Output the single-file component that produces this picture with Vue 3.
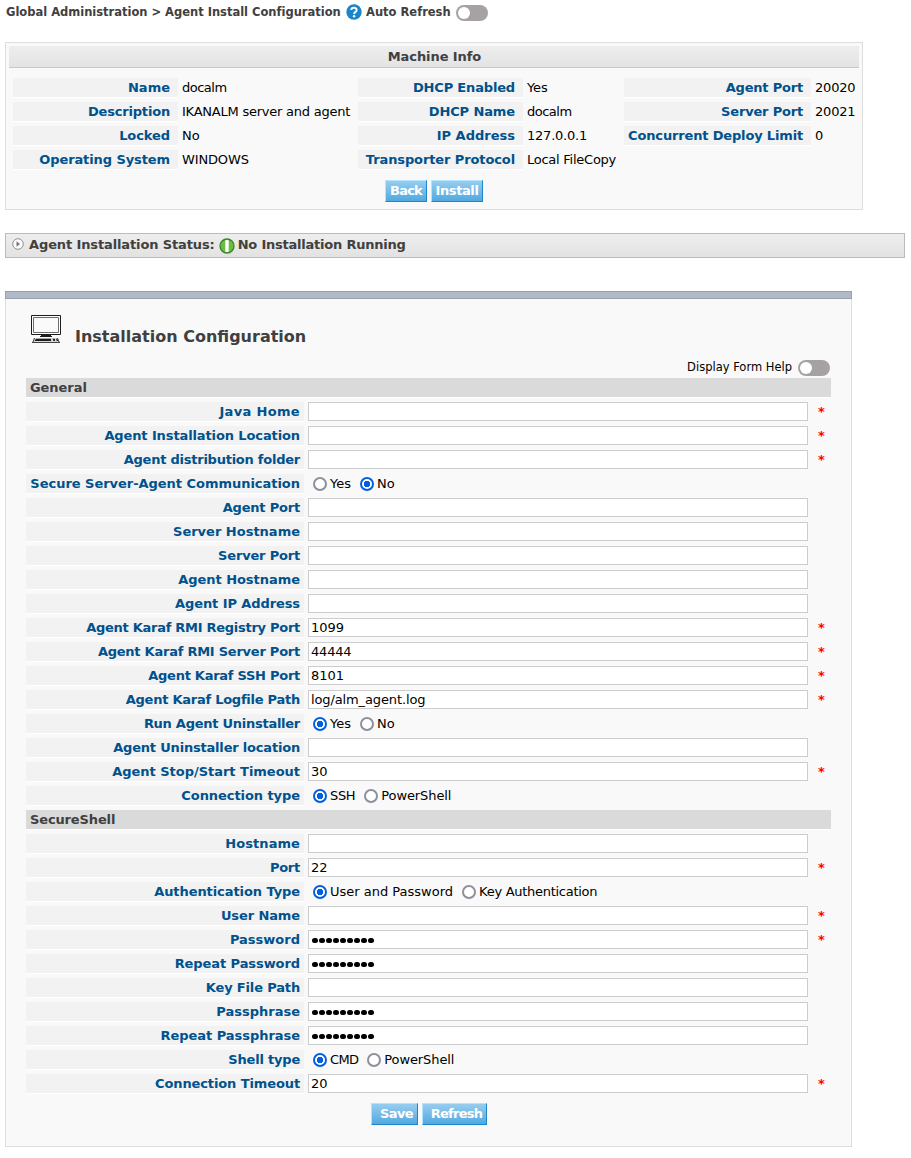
<script setup>
// Each text may carry a tracking amount: the total px to spread over its letters.
const columns = [
  { k: 'c1', rows: [['Name', 'docalm', 0, -3], ['Description', 'IKANALM server and agent', -2, -5.5], ['Locked', 'No', -0.5, 0], ['Operating System', 'WINDOWS', -1.5, -1]] },
  { k: 'c2', rows: [['DHCP Enabled', 'Yes', -2, -0.5], ['DHCP Name', 'docalm', -1, -3], ['IP Address', '127.0.0.1', 0, -2], ['Transporter Protocol', 'Local FileCopy', -2.2, -3.5]] },
  { k: 'c3', rows: [['Agent Port', '20020', -2, -1], ['Server Port', '20021', -2, -1], ['Concurrent Deploy Limit', '0', -3.7, 0]] }
]
const sections = [
  {
    title: 'General',
    t: -0.4,
    rows: [
      { l: 'Java Home', t: 3, req: true },
      { l: 'Agent Installation Location', t: -3, req: true },
      { l: 'Agent distribution folder', t: -6, req: true },
      { l: 'Secure Server-Agent Communication', t: -1, opts: [['Yes', 0], ['No', 0]], sel: 1 },
      { l: 'Agent Port', t: -2 },
      { l: 'Server Hostname', t: 0 },
      { l: 'Server Port', t: -2 },
      { l: 'Agent Hostname', t: -0.5 },
      { l: 'Agent IP Address', t: -1.5 },
      { l: 'Agent Karaf RMI Registry Port', t: -8, v: '1099', req: true },
      { l: 'Agent Karaf RMI Server Port', t: -6.5, v: '44444', vt: -1, req: true },
      { l: 'Agent Karaf SSH Port', t: -5.3, v: '8101', req: true },
      { l: 'Agent Karaf Logfile Path', t: -6, v: 'log/alm_agent.log', vt: -2, req: true },
      { l: 'Run Agent Uninstaller', t: -5.5, opts: [['Yes', 0], ['No', 0]], sel: 0 },
      { l: 'Agent Uninstaller location', t: -5 },
      { l: 'Agent Stop/Start Timeout', t: -0.5, v: '30', req: true },
      { l: 'Connection type', t: -1, opts: [['SSH', -1], ['PowerShell', -1]], sel: 0 }
    ]
  },
  {
    title: 'SecureShell',
    t: -1.5,
    rows: [
      { l: 'Hostname', t: 0.5 },
      { l: 'Port', t: -1, v: '22', req: true },
      { l: 'Authentication Type', t: -1.5, opts: [['User and Password', 0], ['Key Authentication', -5]], sel: 0 },
      { l: 'User Name', t: -1, req: true },
      { l: 'Password', t: 0, dots: 9, req: true },
      { l: 'Repeat Password', t: -1.2, dots: 9 },
      { l: 'Key File Path', t: -2 },
      { l: 'Passphrase', t: 0, dots: 9 },
      { l: 'Repeat Passphrase', t: -0.7, dots: 9 },
      { l: 'Shell type', t: -2, opts: [['CMD', -2], ['PowerShell', -1]], sel: 0 },
      { l: 'Connection Timeout', t: -2, v: '20', req: true }
    ]
  }
]
const track = (text, total) => ({ letterSpacing: `${((total || 0) / text.length).toFixed(3)}px` })
</script>

<template>
  <div class="page">
    <header class="crumbs">
      <span class="path">Global Administration &gt; Agent Install Configuration</span>
      <svg class="help" width="16" height="16" viewBox="0 0 16 16">
        <circle cx="8" cy="8" r="7.7" fill="#1c84c9" />
        <path d="M5.3 6.1C5.3 2.9 10.7 2.9 10.7 6C10.7 8 8.1 8 8.1 10" fill="none" stroke="#fff" stroke-width="1.9" />
        <circle cx="8.1" cy="12.3" r="1.2" fill="#fff" />
      </svg>
      <span class="auto">Auto Refresh</span>
      <span class="toggle"></span>
    </header>

    <section class="machine">
      <h2>Machine Info</h2>
      <div class="cols">
        <div v-for="c in columns" :key="c.k" class="col" :class="c.k">
          <div v-for="r in c.rows" :key="r[0]" class="pair">
            <span class="lbl" :style="track(r[0], r[2])">{{ r[0] }}</span>
            <span class="val" :style="track(r[1], r[3])">{{ r[1] }}</span>
          </div>
        </div>
      </div>
      <div class="buttons">
        <button class="btn back">Back</button>
        <button class="btn install">Install</button>
      </div>
    </section>

    <section class="status">
      <svg width="12" height="12" viewBox="0 0 12 12">
        <circle cx="6" cy="6" r="5.3" fill="#fafafa" stroke="#929292" />
        <path d="M4.5 3.2L8 6L4.5 8.8Z" fill="#777" />
      </svg>
      <span class="stxt">Agent Installation Status:</span>
      <svg class="ok" width="16" height="16" viewBox="0 0 16 16">
        <circle cx="8" cy="8" r="7" fill="#6fbb44" stroke="#39852f" stroke-width="1.3" />
        <rect x="6.3" y="2" width="3.4" height="12" rx="1.2" fill="#fff" />
      </svg>
      <span class="running">No Installation Running</span>
    </section>

    <section class="config">
      <div class="strip"></div>
      <div class="body">
        <div class="heading">
          <svg width="30" height="28" viewBox="0 0 30 28">
            <path d="M.5 .5H29.5V19.5H.5Z" fill="#fff" stroke="#1d1d1b" />
            <path d="M2.5 2.5H27.5V17.5H2.5Z" fill="#fafafa" stroke="#6d6d6d" />
            <path d="M10 20H20V21H21V22H9V21H10Z" fill="#1d1d1b" />
            <path d="M3 23H27L29 28H1Z" fill="#d8d8d8" />
            <path d="M5 23.7H20V26H3.5Z M21.5 23.7H24V26H22.5Z M25 23.7H26.3L27 26H25.7Z" fill="#1d1d1b" />
            <path d="M1 27.5H29M2 27L3.5 23M28 27L26.5 23" stroke="#444" />
          </svg>
          <h1>Installation Configuration</h1>
        </div>
        <div class="formhelp"><span>Display Form Help</span><i class="toggle"></i></div>
        <template v-for="s in sections" :key="s.title">
          <h3 :style="track(s.title, s.t)">{{ s.title }}</h3>
          <div v-for="r in s.rows" :key="r.l" class="row">
            <span class="lbl" :style="track(r.l, r.t)">{{ r.l }}</span>
            <div v-if="r.opts" class="radios">
              <span v-for="(o, i) in r.opts" :key="o[0]" class="opt">
                <i class="radio" :class="{ on: i === r.sel }"></i><span :style="track(o[0], o[1])">{{ o[0] }}</span>
              </span>
            </div>
            <div v-else class="field">
              <span v-if="r.dots" class="dots"><i v-for="n in r.dots" :key="n"></i></span>
              <span v-else-if="r.v" :style="track(r.v, r.vt)">{{ r.v }}</span>
            </div>
            <b v-if="r.req" class="req">*</b>
          </div>
        </template>
        <div class="buttons">
          <button class="btn save">Save</button>
          <button class="btn refresh">Refresh</button>
        </div>
      </div>
    </section>
  </div>
</template>

<style>
body { background: #fff; }
</style>

<style scoped>
* { box-sizing: border-box; }
.page {
  width: 911px;
  height: 1158px;
  overflow: hidden;
  padding: 0 5px;
  font: 13px/19px Verdana, "DejaVu Sans", sans-serif;
  color: #000;
  white-space: nowrap;
}
h1, h2, h3 { margin: 0; }
.crumbs {
  display: flex;
  height: 42px;
  padding: 3px 0 0 1px;
  font-size: 11.5px;
  font-weight: bold;
  color: #404040;
}
.path { width: 334px; letter-spacing: -0.01px; }
.auto { width: 84px; }
.help { margin: 1px 4px 0 6px; }
.toggle {
  width: 32px;
  height: 16px;
  margin: 2px 0 0 6px;
  border-radius: 8px;
  background: #a6a2a3;
}
.toggle::before {
  content: "";
  display: block;
  width: 12px;
  height: 12px;
  margin: 2px;
  border-radius: 50%;
  background: #fff;
}
.machine {
  width: 858px;
  height: 168px;
  padding: 3px;
  border: 1px solid #ddd;
  background: #f9f9f9;
}
h2 {
  height: 22px;
  padding-left: 1px;
  font-size: 13px;
  line-height: 21px;
  letter-spacing: -0.08px;
  text-align: center;
  color: #404040;
  background: linear-gradient(#eee, #e3e3e3);
  border-bottom: 1px solid #c8c8c8;
}
.cols { display: flex; padding: 10px 0 0 4px; }
.col { display: flex; flex-direction: column; gap: 5px; }
.c1 { width: 345px; }
.c2 { width: 266px; }
.pair { display: flex; height: 19px; }
.lbl {
  height: 19px;
  padding-right: 8px;
  text-align: right;
  font-weight: bold;
  color: #00518c;
  background: #f2f2f2;
  box-shadow: 0 1px #fff;
}
.c1 .lbl { width: 165px; }
.c2 .lbl { width: 165px; }
.c3 .lbl { width: 187px; }
.val { padding-left: 4px; }
.buttons { display: flex; gap: 4px; }
.machine .buttons { padding: 11px 0 0 376px; }
.btn {
  height: 22px;
  padding: 0;
  border: 1px solid;
  border-color: #b5e3fb #1d87cc #1d87cc #b5e3fb;
  font: bold 13px/20px Verdana, "DejaVu Sans", sans-serif;
  color: #fff;
  text-align: center;
  background: linear-gradient(#97cdef, #51a9e0);
}
.back { width: 42px; letter-spacing: -0.8px; }
.install { width: 52px; letter-spacing: -0.4px; }
.save { width: 47px; padding-left: 4px; letter-spacing: -0.6px; }
.refresh { width: 65px; padding-left: 4px; letter-spacing: -0.75px; }
.status {
  display: flex;
  width: 900px;
  height: 25px;
  margin-top: 23px;
  padding: 1px 0 0 6px;
  border: 1px solid #bbb;
  background: linear-gradient(#eee, #e2e2e2);
  font-weight: bold;
  color: #404040;
}
.status svg { margin-top: 3px; }
.status .stxt { margin-left: 5px; letter-spacing: -0.12px; }
.status .ok { margin: 3px 3px 0 4px; }
.running { letter-spacing: -0.22px; }
.config { width: 847px; height: 856px; margin-top: 33px; }
.strip { height: 8px; border: 1px solid #98a0ad; background: #b3bac7; }
.body {
  height: 848px;
  padding: 16px 20px 0;
  border: 1px solid #ddd;
  border-top: 0;
  background: #f9f9f9;
}
.heading { display: flex; height: 43px; padding-left: 5px; }
h1 { margin: 10px 0 0 14px; font-size: 16px; line-height: 24px; color: #404040; }
.formhelp {
  display: flex;
  justify-content: flex-end;
  height: 20px;
  padding-right: 1px;
  font-size: 11.5px;
  line-height: 18px;
}
h3 {
  width: 805px;
  height: 19px;
  margin-bottom: 5px;
  padding-left: 4px;
  font-size: 13px;
  color: #404040;
  background: #dadada;
  box-shadow: 0 1px #fff;
}
.row { display: flex; height: 19px; margin-bottom: 5px; }
.row .lbl { width: 278px; padding-right: 4px; }
.field {
  width: 500px;
  height: 19px;
  margin-left: 4px;
  padding-left: 2px;
  line-height: 18px;
  border: 1px solid #ccc;
  background: #fff;
}
.req { margin-left: 10px; color: #f00; }
.radios { display: flex; padding-left: 9px; }
.opt { display: flex; margin-right: 9px; }
.radio {
  width: 14px;
  height: 14px;
  margin: 3px 3px 0 0;
  border: 2px solid #8f8f9d;
  border-radius: 50%;
  background: #fff;
}
.radio.on { border-color: #0060df; background: radial-gradient(circle, #0060df 2.9px, #fff 3.5px); }
.dots { display: flex; gap: 1.4px; padding: 6.6px 0 0 1.2px; }
.dots i { width: 5.6px; height: 5.6px; border-radius: 50%; background: #000; }
.body .buttons { padding: 5px 0 0 345px; }
</style>
